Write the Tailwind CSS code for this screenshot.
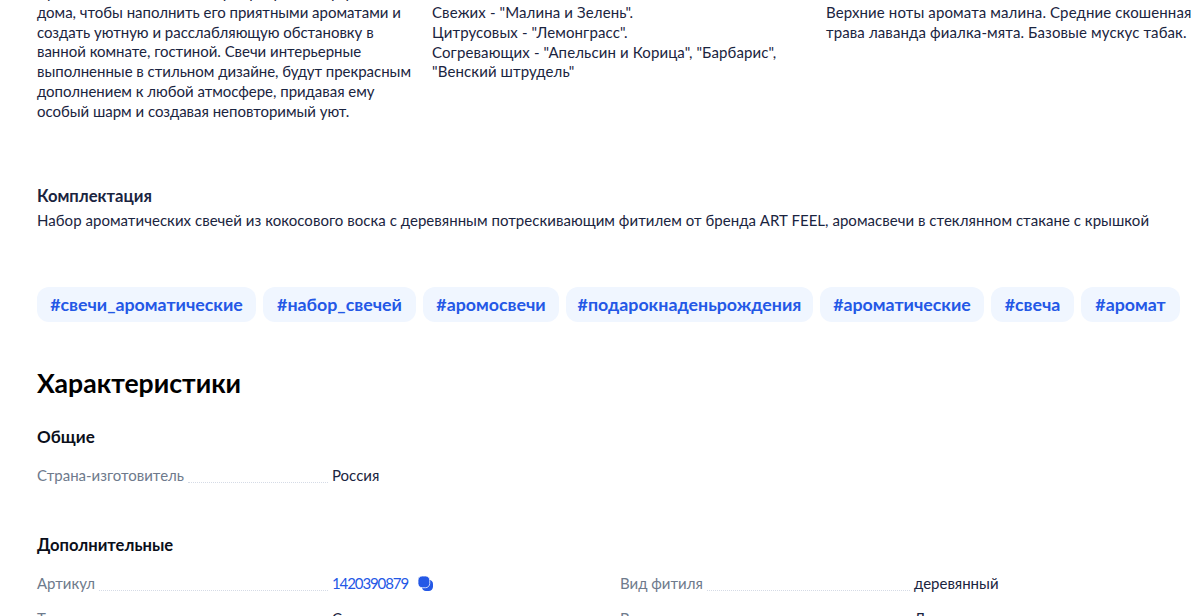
<!DOCTYPE html>
<html>
<head>
  <meta charset="UTF-8">
  <title>Описание и характеристики</title>
  <script src="https://cdn.jsdelivr.net/npm/@tailwindcss/browser@4"></script>
</head>
<body class="bg-white font-['Lato',sans-serif]">

  <div class="w-[1200px] h-[616px] overflow-hidden pl-[37px]">

    <!-- description columns -->
    <div class="flex -mt-[17px] text-[15px] leading-[19.8px] text-[#1a2440] whitespace-nowrap">
      <p class="w-[395px] tracking-[-0.02px]">Ароматические свечи станут прекрасным украшением<br>дома, чтобы наполнить его приятными ароматами и<br>создать уютную и расслабляющую обстановку в<br>ванной комнате, гостиной. Свечи интерьерные<br>выполненные в стильном дизайне, будут прекрасным<br>дополнением к любой атмосфере, придавая ему<br>особый шарм и создавая неповторимый уют.</p>
      <p class="w-[394px] pt-[20px] tracking-[0.12px]">Свежих - "Малина и Зелень".<br>Цитрусовых - "Лемонграсс".<br>Согревающих - "Апельсин и Корица", "Барбарис",<br>"Венский штрудель"</p>
      <p class="w-[374px] pt-[20px] tracking-[0.12px]">Верхние ноты аромата малина. Средние скошенная<br>трава лаванда фиалка-мята. Базовые мускус табак.</p>
    </div>

    <!-- complectation -->
    <div class="mt-[64px]">
      <h3 class="text-[16.6px] leading-[20px] font-bold text-[#1a2440]">Комплектация</h3>
      <p class="mt-[4px] text-[15px] leading-[20px] tracking-[0.04px] text-[#1a2440] whitespace-nowrap">Набор ароматических свечей из кокосового воска с деревянным потрескивающим фитилем от бренда ART FEEL, аромасвечи в стеклянном стакане с крышкой</p>
    </div>

    <!-- tags -->
    <div class="flex gap-[7px] mt-[57px] text-[17.8px] font-bold text-[#2458e6] whitespace-nowrap">
      <a class="flex items-center justify-center w-[219px] h-[35px] pt-[1px] rounded-[12px] bg-[#f0f6ff]">#свечи_ароматические</a>
      <a class="flex items-center justify-center w-[153px] h-[35px] pt-[1px] rounded-[12px] bg-[#f0f6ff]">#набор_свечей</a>
      <a class="flex items-center justify-center w-[136px] h-[35px] pt-[1px] rounded-[12px] bg-[#f0f6ff]">#аромосвечи</a>
      <a class="flex items-center justify-center w-[247px] h-[35px] pt-[1px] rounded-[12px] bg-[#f0f6ff]">#подарокнаденьрождения</a>
      <a class="flex items-center justify-center w-[164px] h-[35px] pt-[1px] rounded-[12px] bg-[#f0f6ff]">#ароматические</a>
      <a class="flex items-center justify-center w-[83px] h-[35px] pt-[1px] rounded-[12px] bg-[#f0f6ff]">#свеча</a>
      <a class="flex items-center justify-center w-[99px] h-[35px] pt-[1px] rounded-[12px] bg-[#f0f6ff]">#аромат</a>
    </div>

    <!-- characteristics -->
    <h2 class="mt-[45px] text-[26.6px] leading-[32px] font-bold text-black">Характеристики</h2>

    <h3 class="mt-[28px] text-[17px] leading-[20px] font-bold text-[#0b0f1a]">Общие</h3>
    <div class="mt-[18px] flex h-[20px] text-[15px] leading-[20px]">
      <div class="flex w-[295px] pr-[4px]">
        <span class="text-[#6e7a8c]">Страна-изготовитель</span>
        <span class="flex-1 ml-[4px] mb-[2px] border-b border-dotted border-[#d5dbe6]"></span>
      </div>
      <span class="text-[#1a2440]">Россия</span>
    </div>

    <h3 class="mt-[50px] text-[16.6px] leading-[20px] font-bold text-[#0b0f1a]">Дополнительные</h3>

    <div class="mt-[18px] grid grid-cols-[583px_1fr] gap-y-[15px] text-[15px] leading-[20px] whitespace-nowrap">
      <div class="flex">
        <div class="flex w-[295px] pr-[4px]">
          <span class="text-[#6e7a8c]">Артикул</span>
          <span class="flex-1 ml-[4px] mb-[2px] border-b border-dotted border-[#d5dbe6]"></span>
        </div>
        <span class="text-[#2458e6] tracking-[-1.1px]">1420390879</span>
        <svg class="ml-[10px] mt-[3px]" width="15" height="15" viewBox="0 0 16 16">
          <rect x="4" y="4" width="12" height="12" rx="4.5" fill="#2458e6"/>
          <rect x="0" y="0" width="12.5" height="12.5" rx="4.5" fill="#2458e6" stroke="#ffffff" stroke-width="0.8"/>
        </svg>
      </div>
      <div class="flex">
        <div class="flex w-[294px] pr-[4px]">
          <span class="text-[#6e7a8c]">Вид фитиля</span>
          <span class="flex-1 ml-[4px] mb-[2px] border-b border-dotted border-[#d5dbe6]"></span>
        </div>
        <span class="text-[#1a2440]">деревянный</span>
      </div>
      <div class="flex">
        <div class="flex w-[295px] pr-[4px]">
          <span class="text-[#6e7a8c]">Тип свечи</span>
          <span class="flex-1 ml-[4px] mb-[2px] border-b border-dotted border-[#d5dbe6]"></span>
        </div>
        <span class="text-[#1a2440]">Свеча ароматическая</span>
      </div>
      <div class="flex">
        <div class="flex w-[294px] pr-[4px]">
          <span class="text-[#6e7a8c]">Воск</span>
          <span class="flex-1 ml-[4px] mb-[2px] border-b border-dotted border-[#d5dbe6]"></span>
        </div>
        <span class="text-[#1a2440]">Для дома</span>
      </div>
    </div>
  </div>

</body>
</html>
